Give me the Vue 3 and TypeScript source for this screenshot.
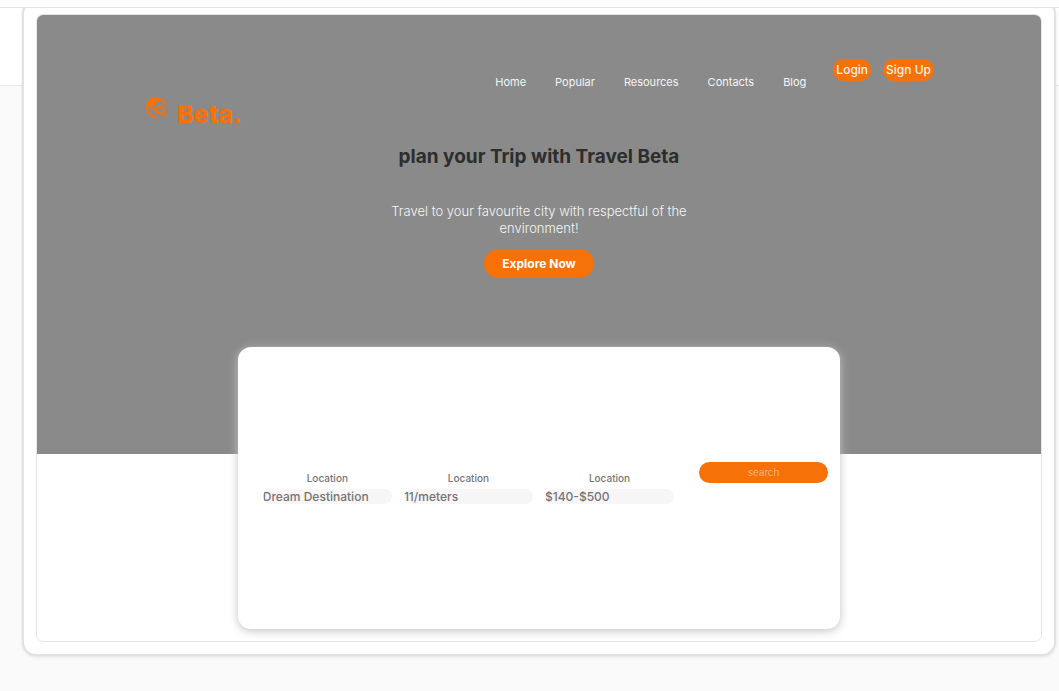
<script setup lang="ts">
interface Field {
  id: string
  label: string
  placeholder: string
}

const links: string[] = ['Home', 'Popular', 'Resources', 'Contacts', 'Blog']

const fields: Field[] = [
  { id: 'destination', label: 'Location', placeholder: 'Dream Destination' },
  { id: 'distance', label: 'Location', placeholder: '11/meters' },
  { id: 'price', label: 'Location', placeholder: '$140-$500' },
]
</script>

<template>
  <div class="page">
    <div class="stage">
      <div class="frame">
        <main class="site">
          <section class="hero">
            <header class="header">
              <a class="logo" href="#">
                <svg class="logo-icon" viewBox="0 0 24 24" aria-hidden="true">
                  <path
                    d="M19.3 16.9c.4-.7.7-1.5.7-2.4 0-2.5-2-4.5-4.5-4.5S11 12 11 14.5s2 4.5 4.5 4.5c.9 0 1.7-.3 2.4-.7l3.2 3.2 1.4-1.4-3.2-3.2zm-3.8.1c-1.4 0-2.5-1.1-2.5-2.5s1.1-2.5 2.5-2.5 2.5 1.1 2.5 2.5-1.1 2.5-2.5 2.5zM12 20v2C6.48 22 2 17.52 2 12S6.48 2 12 2c4.84 0 8.87 3.44 9.8 8h-2.07A8 8 0 0 0 15 4.59V5c0 1.1-.9 2-2 2h-2v2c0 .55-.45 1-1 1H8v2h2v3H9l-4.79-4.79C4.08 10.79 4 11.38 4 12c0 4.41 3.59 8 8 8z"
                  />
                </svg>
                <span class="logo-name">Beta.</span>
              </a>
              <nav class="nav">
                <a v-for="link in links" :key="link" class="nav-link" href="#">{{ link }}</a>
              </nav>
              <div class="account">
                <button class="pill" type="button">Login</button>
                <button class="pill" type="button">Sign Up</button>
              </div>
            </header>
            <div class="intro">
              <h1 class="title">plan your Trip with Travel Beta</h1>
              <p class="lead">Travel to your favourite city with respectful of the environment!</p>
              <button class="explore" type="button">Explore Now</button>
            </div>
          </section>
          <form class="card" @submit.prevent>
            <div v-for="field in fields" :key="field.id" class="field">
              <label class="label" :for="field.id">{{ field.label }}</label>
              <input :id="field.id" class="input" type="text" :placeholder="field.placeholder" />
            </div>
            <button class="search" type="submit">search</button>
          </form>
        </main>
      </div>
    </div>
  </div>
</template>

<style>
body {
  margin: 0;
  background: #fafafa;
}
</style>

<style scoped>
.page,
.page * {
  box-sizing: border-box;
}

.page {
  min-height: 100vh;
  border-top: 7px solid #fff;
  background: #fafafa;
  font-family: Inter, 'Liberation Sans', sans-serif;
}

.stage {
  position: relative;
  overflow: hidden;
  border-top: 1px solid #e5e5e5;
  padding: 0 3px 32px 22px;
}

.stage::before {
  content: '';
  position: absolute;
  top: 0;
  left: 0;
  right: 0;
  height: 77px;
  border-bottom: 1px solid #e7e7e7;
  background: #fff;
}

.frame {
  position: relative;
  margin-top: -8px;
  padding: 12px;
  border: 2px solid #e2e2e2;
  border-radius: 14px;
  background: #fff;
  box-shadow: 0 1px 3px rgba(0, 0, 0, 0.1);
}

.site {
  overflow: hidden;
  border: 1px solid #e5e5e5;
  border-radius: 7px;
  padding-bottom: 12px;
}

.hero {
  height: 439px;
  background: #8a8a8a;
}

.header {
  display: flex;
  align-items: flex-start;
  padding: 44px 107px 0;
}

.logo {
  display: flex;
  align-items: flex-start;
  gap: 8px;
  margin-top: 36px;
  color: #f77109;
  text-decoration: none;
}

.logo-icon {
  width: 25px;
  height: 25px;
  fill: currentColor;
}

.logo-name {
  margin-top: 4px;
  font-size: 25px;
  line-height: 30px;
  font-weight: 800;
}

.nav {
  display: flex;
  gap: 29px;
  margin: 15px 27px 0 auto;
}

.nav-link {
  color: #f5f5f5;
  font-size: 11px;
  line-height: 16px;
  text-decoration: none;
}

.account {
  display: flex;
  gap: 12px;
}

.pill,
.explore,
.search {
  border: 0;
  background: #f77109;
  color: #fff;
  font-family: inherit;
}

.pill {
  height: 22px;
  padding: 0 3px 2px;
  border-radius: 11px;
  color: #f7f2ee;
  font-size: 12px;
  font-weight: 500;
}

.intro {
  display: flex;
  flex-direction: column;
  align-items: center;
  padding-top: 16px;
}

.title {
  margin: 0;
  color: #2d2d2d;
  font-size: 19px;
  line-height: 24px;
  font-weight: 700;
}

.lead {
  max-width: 314px;
  margin: 34px 0 12px;
  color: #f5f5f5;
  font-size: 13px;
  line-height: 17px;
  font-weight: 300;
  text-align: center;
}

.explore {
  height: 29px;
  padding: 0 18px;
  border-radius: 15px;
  font-size: 12px;
  font-weight: 700;
}

.card {
  position: relative;
  display: flex;
  align-items: center;
  gap: 12px;
  width: 60%;
  height: 282px;
  margin: -107px auto 0;
  padding: 0 12px 0 25px;
  border-radius: 13px;
  background: #fff;
  box-shadow: 0 2px 10px #c4c4c4;
}

.field {
  display: flex;
  flex: 1;
  flex-direction: column;
  gap: 5px;
  min-width: 0;
}

.label {
  color: #747474;
  font-size: 10px;
  line-height: 12px;
  font-weight: 500;
  text-align: center;
}

.input {
  width: 100%;
  height: 15px;
  padding: 0;
  border: 0;
  border-radius: 8px;
  background: #f7f5f6;
  color: #747474;
  font-family: inherit;
  font-size: 12px;
  line-height: 15px;
  font-weight: 500;
}

.input::placeholder {
  color: #747474;
  opacity: 1;
}

.search {
  flex: 1;
  height: 21px;
  margin: 0 0 32px 13px;
  padding: 0;
  border-radius: 11px;
  color: #fbc294;
  font-size: 10px;
  font-weight: 300;
}
</style>
